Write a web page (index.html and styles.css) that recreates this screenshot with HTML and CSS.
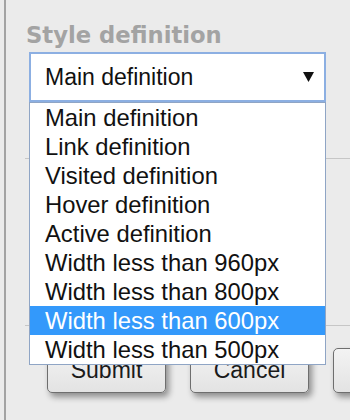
FILE: index.html
```html
<!DOCTYPE html>
<html lang="en">

<head>
    <meta charset="UTF-8" />
    <meta name="viewport" content="width=device-width, initial-scale=1.0" />
    <title>Style definition</title>
    <link rel="stylesheet" href="styles.css">
</head>

<body>
    <div class="panel">
        <h2 class="field-title">Style definition</h2>

        <div class="select-wrap">
            <div class="select-box">
                <span class="select-value">Main definition</span>
                <svg class="select-arrow" width="11" height="10" viewBox="0 0 11 10">
                    <polygon points="0,0 11,0 5.5,10" fill="#111" />
                </svg>
            </div>

            <ul class="select-list">
                <li>Main definition</li>
                <li>Link definition</li>
                <li>Visited definition</li>
                <li>Hover definition</li>
                <li>Active definition</li>
                <li>Width less than 960px</li>
                <li>Width less than 800px</li>
                <li class="selected">Width less than 600px</li>
                <li>Width less than 500px</li>
            </ul>
        </div>

        <hr class="rule first">
        <div class="section"></div>
        <hr class="rule">

        <div class="actions">
            <button class="btn">Submit</button>
            <button class="btn">Cancel</button>
            <button class="btn"></button>
        </div>
    </div>
</body>

</html>
```

FILE: styles.css
```css
body {
    margin: 0;
    background: #ebebeb;
    font-family: 'Liberation Sans', Arial, sans-serif;
    height: 420px;
    overflow: hidden;
}

.panel {
    margin-left: 4px;
    border-left: 2px solid #a3a3a3;
    height: 420px;
    padding: 22px 0 0 19px;
    box-sizing: border-box;
    overflow: hidden;
}

.field-title {
    margin: 0 0 4px 1px;
    font-family: 'DejaVu Sans', Verdana, sans-serif;
    font-size: 22.7px;
    line-height: 26px;
    font-weight: bold;
    color: #a3a3a3;
}

.select-wrap {
    position: relative;
    margin-left: 4px;
    width: 297px;
}

.select-box {
    display: flex;
    align-items: center;
    justify-content: space-between;
    height: 50px;
    box-sizing: border-box;
    border: 2px solid #8cafe2;
    background: #fff;
    padding: 0 10px 0 14px;
}

.select-value {
    font-size: 23px;
    line-height: 26px;
    color: #111;
}

.select-list {
    position: absolute;
    top: 50px;
    left: 0;
    width: 297px;
    box-sizing: border-box;
    margin: 0;
    padding: 0;
    list-style: none;
    background: #fff;
    border: 1px solid #8fa5c5;
    z-index: 10;
}

.select-list li {
    height: 29px;
    line-height: 29px;
    padding-left: 15px;
    font-size: 23.8px;
    color: #111;
    white-space: nowrap;
}

.select-list li.selected {
    background: #3399fb;
    color: #fff;
}

.rule {
    margin: 0;
    border: none;
    border-top: 1px solid #c6c6c6;
}

.rule.first {
    margin-top: 56px;
}

.section {
    height: 166px;
}

.actions {
    display: flex;
    gap: 24px;
    margin-top: 22px;
    padding-left: 22px;
}

.btn {
    flex-shrink: 0;
    width: 119px;
    height: 45px;
    border: 1px solid #6e6e6e;
    border-radius: 5px;
    background: linear-gradient(#f3f3f3, #e3e3e3);
    box-shadow: 3px 4px 6px rgba(0, 0, 0, 0.4);
    font-family: 'Liberation Sans', Arial, sans-serif;
    font-size: 23px;
    color: #1a1a1a;
    padding: 0;
}
```
